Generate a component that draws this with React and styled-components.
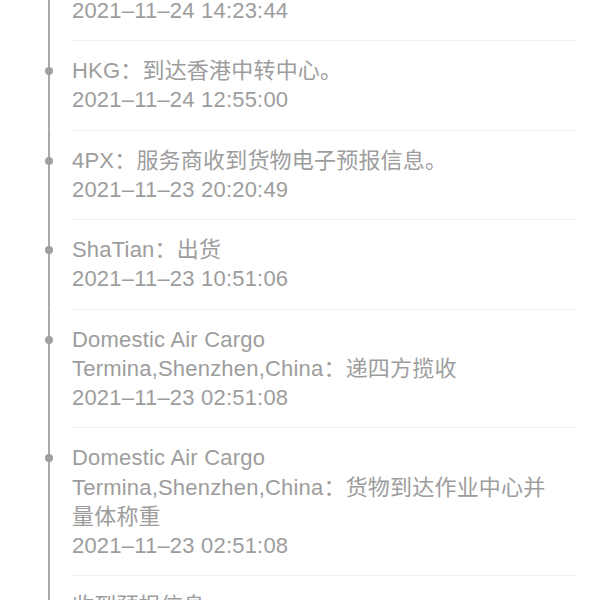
import styled, { createGlobalStyle } from 'styled-components';

const GlobalStyle = createGlobalStyle`
	html,
	body {
		margin: 0;
		padding: 0;
		background: #ffffff;
		overflow: hidden;
	}

	body {
		font-family: 'Liberation Sans', 'Noto Sans CJK SC', sans-serif;
	}
`;

const TRACKING = [
	{
		id: 1,
		lines: ['HKG：已离开香港中转中心。'],
		time: '2021–11–24 14:23:44',
	},
	{ id: 2, lines: ['HKG：到达香港中转中心。'], time: '2021–11–24 12:55:00' },
	{
		id: 3,
		lines: ['4PX：服务商收到货物电子预报信息。'],
		time: '2021–11–23 20:20:49',
	},
	{ id: 4, lines: ['ShaTian：出货'], time: '2021–11–23 10:51:06' },
	{
		id: 5,
		lines: ['Domestic Air Cargo', 'Termina,Shenzhen,China：递四方揽收'],
		time: '2021–11–23 02:51:08',
	},
	{
		id: 6,
		lines: [
			'Domestic Air Cargo',
			'Termina,Shenzhen,China：货物到达作业中心并量体称重',
		],
		time: '2021–11–23 02:51:08',
	},
	{ id: 7, lines: ['收到预报信息'], time: '2021–11–23 02:40:12' },
];

const TimelineList = styled.ul`
	list-style: none;
	margin: -49.5px 0 0;
	padding: 0;
`;

const Item = styled.li`
	display: grid;
	grid-template-columns: 72px 1fr;
`;

const Marker = styled.div`
	width: 10px;
	margin-left: 44px;
	display: flex;
	justify-content: center;
	align-items: flex-start;
	padding-top: 27px;
	background: linear-gradient(#a8a8a8, #a8a8a8) center / 2px 100% no-repeat;
`;

const Dot = styled.span`
	width: 8px;
	height: 8px;
	border-radius: 50%;
	background: #a0a0a0;
`;

const Content = styled.div`
	margin-right: 24px;
	padding: 15px 18px 15px 0;
	border-top: 1px solid #f1f1f1;
	font-size: 22px;
	line-height: 29.25px;
	letter-spacing: 0.2px;
	color: #9d9d9d;
`;

const Text = styled.div`
	word-break: break-word;
`;

const Time = styled.div`
	white-space: nowrap;
`;

const App = () => {
	return (
		<>
			<GlobalStyle />
			<TimelineList>
				{TRACKING.map(({ id, lines, time }) => (
					<Item key={id}>
						<Marker>
							<Dot />
						</Marker>
						<Content>
							{lines.map((line) => (
								<Text key={line}>{line}</Text>
							))}
							<Time>{time}</Time>
						</Content>
					</Item>
				))}
			</TimelineList>
		</>
	);
};

export default App;
